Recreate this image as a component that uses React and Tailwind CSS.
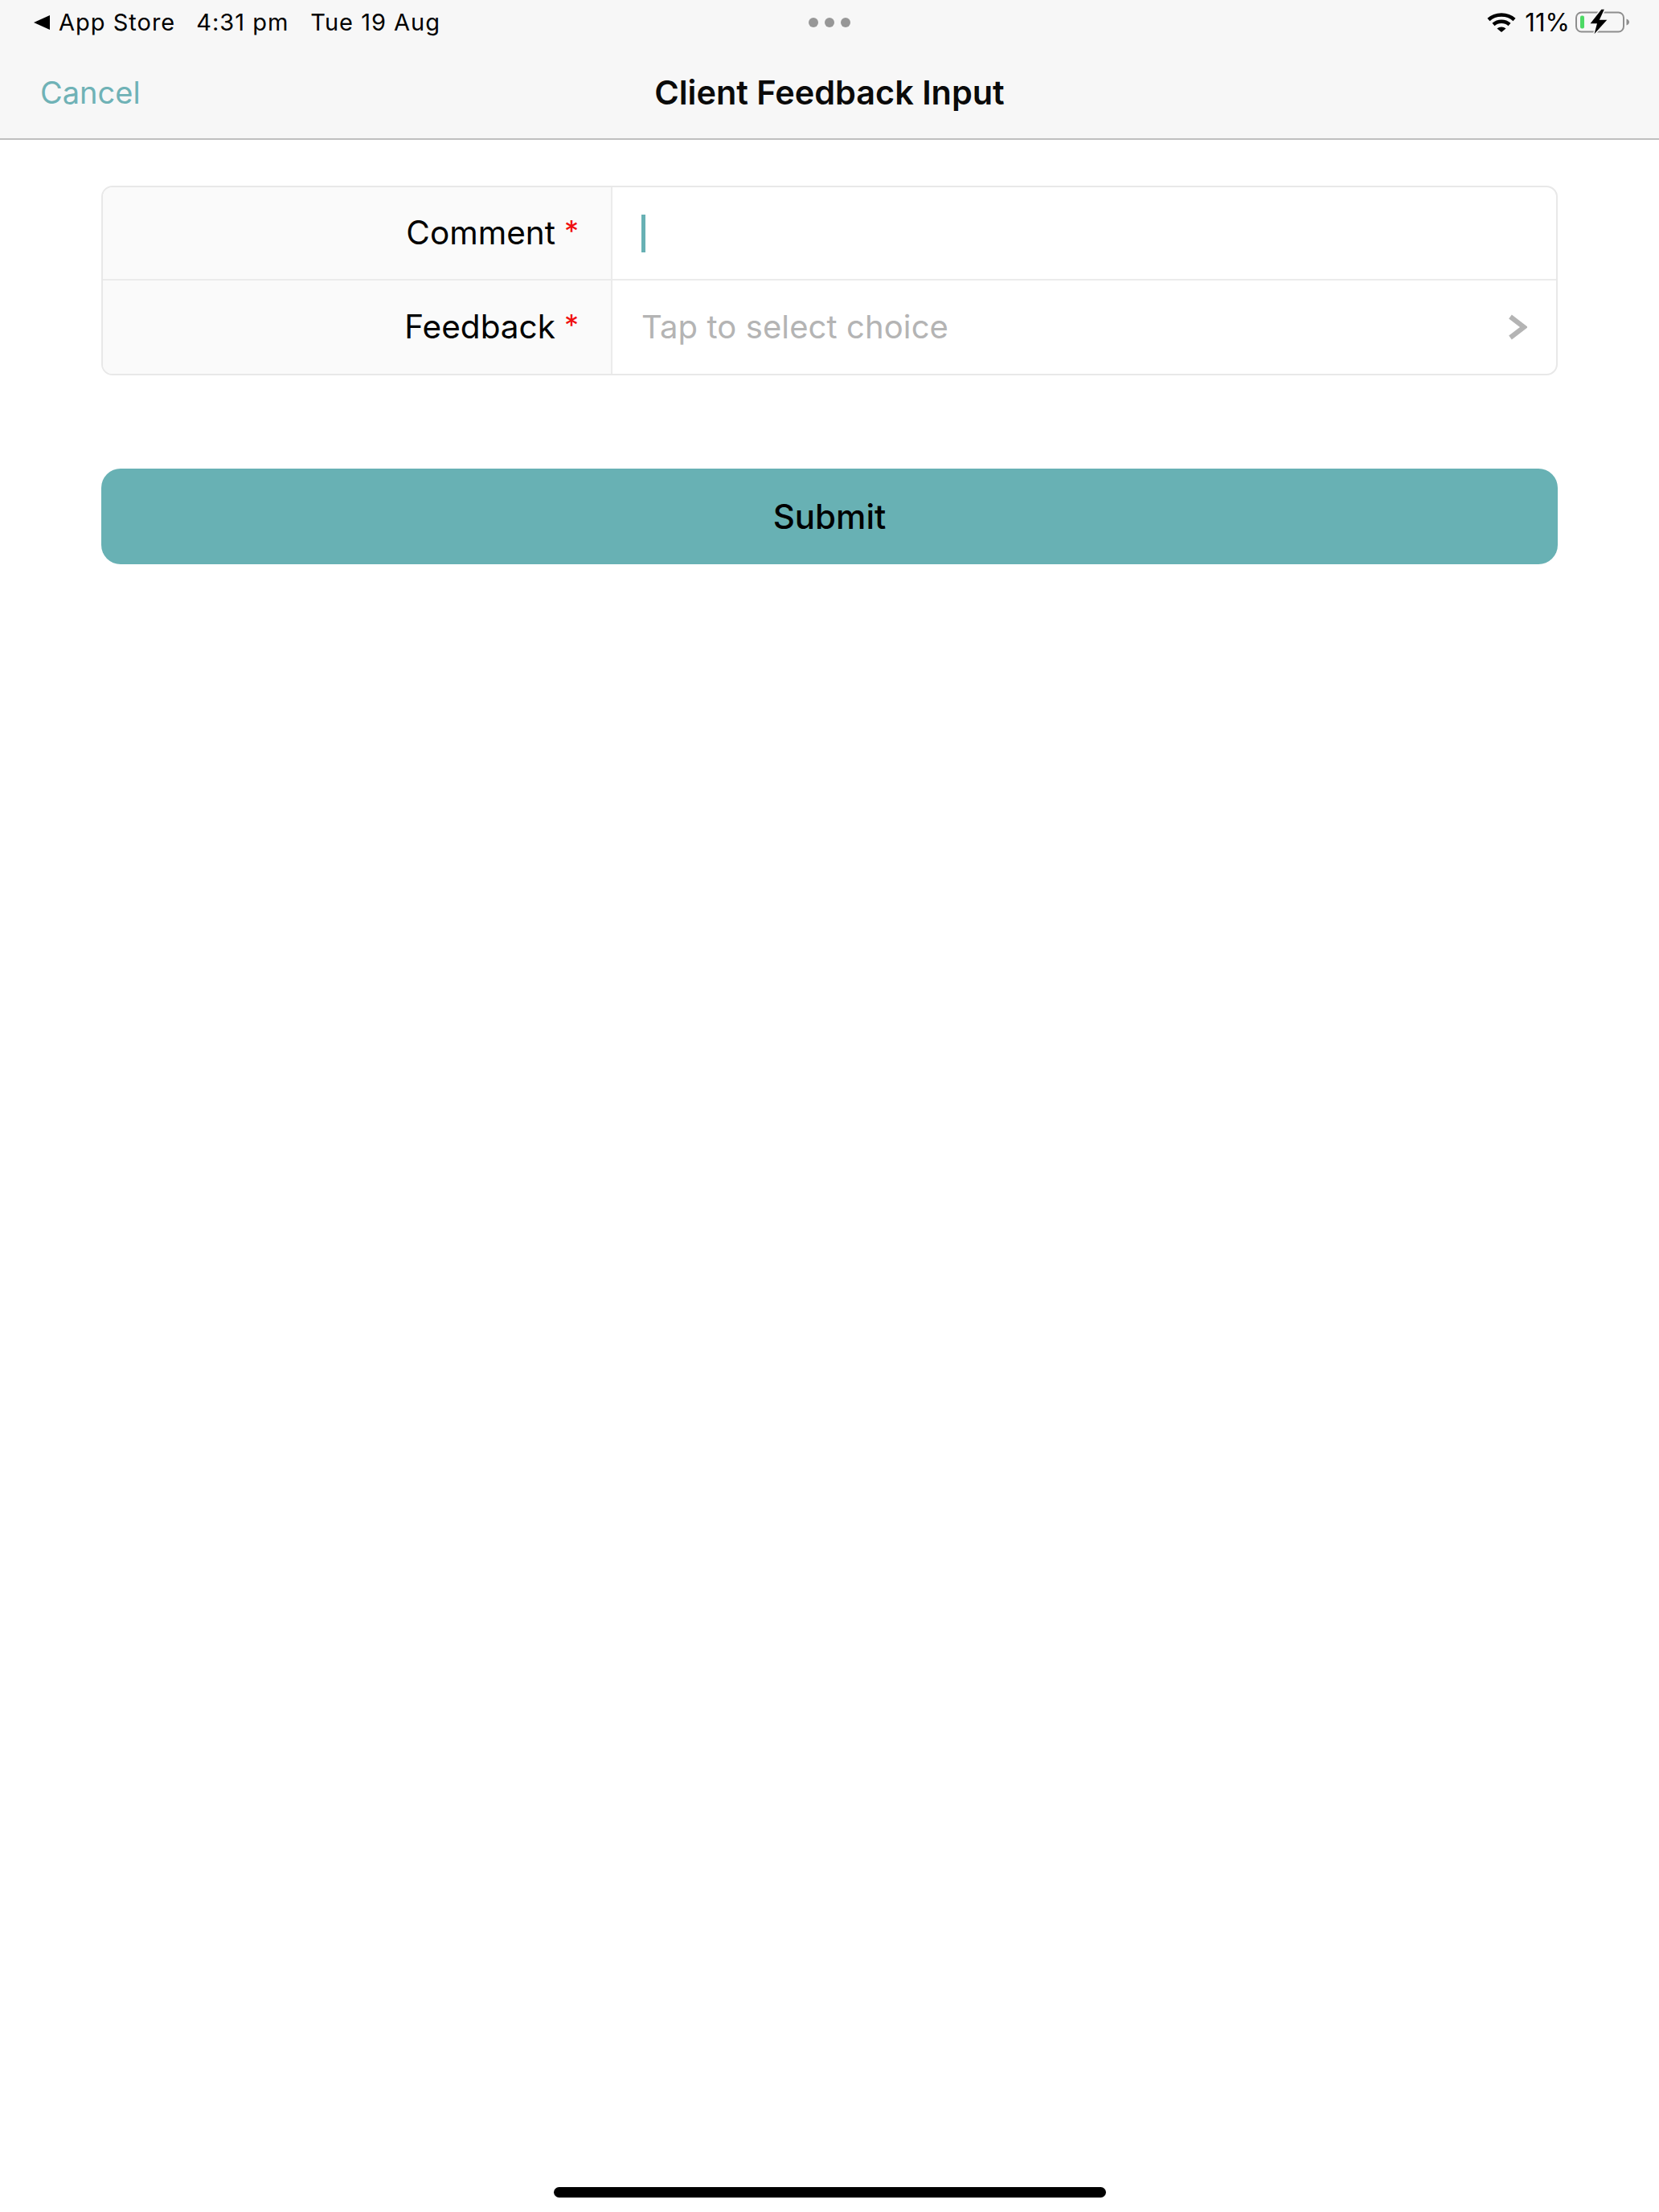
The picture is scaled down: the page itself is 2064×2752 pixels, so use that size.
const FONT = 'font-["Inter","Liberation_Sans",sans-serif]'

function Wifi() {
  return (
    <svg width="36" height="26" viewBox="0 0 36 26" fill="none" stroke="#000" strokeWidth="4.5">
      <path d="M2 9.5C10.5 1.5 25.5 1.5 34 9.5" />
      <path d="M8 15.5C13.5 10.5 22.5 10.5 28 15.5" />
      <path d="M12.5 20.5L18 25L23.5 20.5C20.5 17.8 15.5 17.8 12.5 20.5Z" fill="#000" stroke="none" />
    </svg>
  )
}

function Battery() {
  return (
    <svg width="68" height="36" viewBox="0 0 68 36" fill="none">
      <rect x="1" y="5.5" width="59" height="24" rx="6.5" stroke="#8e8e8e" strokeWidth="2" />
      <rect x="6" y="9.5" width="5" height="16" rx="2" fill="#4cd964" />
      <path d="M63.5 13.5C66 14.5 67 16 67 17.5C67 19 66 20.5 63.5 21.5Z" fill="#8e8e8e" />
      <path d="M32 1L17 20H26L22 35L41 14H31L37 1Z" fill="#000" stroke="#f7f7f7" strokeWidth="1.5" />
    </svg>
  )
}

function StatusBar() {
  return (
    <div className="relative flex h-[56px] items-center justify-between pl-[42px] pr-[36px] text-[29px] tracking-[1px] text-black">
      <div className="flex items-center">
        <svg width="20" height="18" viewBox="0 0 20 18" className="mr-[11px]">
          <path d="M0 9L20 0V18Z" fill="#000" />
        </svg>
        <span>App Store</span>
        <span className="ml-[26px]">4:31 pm</span>
        <span className="ml-[27px]">Tue 19 Aug</span>
      </div>
      <div className="absolute left-[1006px] top-[22px] flex gap-[8px]">
        <span className="size-[12px] rounded-full bg-[#979797]" />
        <span className="size-[12px] rounded-full bg-[#979797]" />
        <span className="size-[12px] rounded-full bg-[#979797]" />
      </div>
      <div className="flex items-center">
        <Wifi />
        <span className="ml-[11px] mr-[7px] text-[31px] tracking-normal">11%</span>
        <Battery />
      </div>
    </div>
  )
}

function Row({ label, children, last }) {
  return (
    <div className={`flex h-[116px] ${last ? '' : 'border-b-2 border-[#ebebeb]'}`}>
      <div className="flex w-[634px] shrink-0 items-center justify-end border-r-2 border-[#ebebeb] bg-[#fafafa] pr-[40px] text-[40.5px] text-black">
        <span>{label}</span>
        <span className="ml-[11px] -translate-y-[3px] text-[36px] text-[#f01010]">*</span>
      </div>
      <div className="flex flex-1 items-center pl-[36px] pr-[36px]">{children}</div>
    </div>
  )
}

export default function App() {
  return (
    <div className={`flex min-h-[2752px] flex-col bg-white ${FONT}`}>
      <header className="h-[174px] border-b-2 border-[#bfbfbf] bg-[#f7f7f7]">
        <StatusBar />
        <div className="relative flex h-[116px] items-center justify-center pt-[2px]">
          <span className="absolute left-[50px] text-[38px] text-[#6fb2b6]">Cancel</span>
          <h1 className="text-[41.4px] font-semibold text-[#0a0a0a]">Client Feedback Input</h1>
        </div>
      </header>

      <main className="flex flex-col px-[126px] pt-[57px]">
        <div className="overflow-hidden rounded-[14px] border-2 border-[#e8e8e8]">
          <Row label="Comment">
            <span className="h-[47px] w-[5px] bg-[#68b1b4]" />
          </Row>
          <Row label="Feedback" last>
            <span className="flex-1 text-[40px] tracking-[0.1px] text-[#b4b4b4]">Tap to select choice</span>
            <svg width="24" height="32" viewBox="0 0 24 32" fill="none" stroke="#b4b4b4" strokeWidth="6">
              <path d="M3 3L20 16L3 29" />
            </svg>
          </Row>
        </div>

        <button className="mt-[116px] h-[119px] rounded-[24px] bg-[#68b1b4] text-[42px] font-medium text-black">
          Submit
        </button>
      </main>

      <div className="mt-auto flex justify-center pb-[18px]">
        <div className="h-[13px] w-[687px] rounded-full bg-black" />
      </div>
    </div>
  )
}
